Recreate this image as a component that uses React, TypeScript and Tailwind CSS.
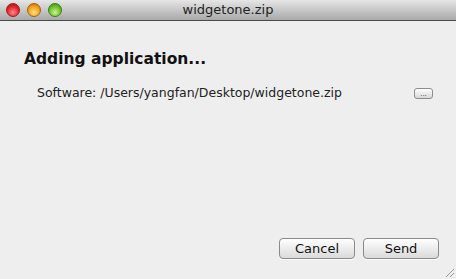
export default function App() {
  return (
    <div
      className="flex h-[279px] w-[456px] flex-col overflow-hidden bg-[#eeeeee] text-black"
      style={{ fontFamily: '"DejaVu Sans", "Liberation Sans", sans-serif' }}
    >
      {/* Title bar */}
      <div className="relative flex h-[21px] shrink-0 items-center border-b border-[#4a4a4a] bg-gradient-to-b from-[#e6e6e6] to-[#a9a9a9]">
        <div className="flex items-center gap-[7px] pl-[6px]">
          <span className="h-[14px] w-[14px] rounded-full border border-[#9c1a1a] bg-[radial-gradient(circle_at_50%_70%,#ff8a8a,#e0262b_55%,#a10f12)]" />
          <span className="h-[14px] w-[14px] rounded-full border border-[#a0620d] bg-[radial-gradient(circle_at_50%_70%,#ffe07a,#f2a11c_55%,#b8670a)]" />
          <span className="h-[14px] w-[14px] rounded-full border border-[#3d7c16] bg-[radial-gradient(circle_at_50%_70%,#c9f58a,#6cc22d_55%,#3c8412)]" />
        </div>
        <div className="absolute inset-x-0 top-0 flex h-[20px] items-center justify-center text-[13px] text-[#222]">
          widgetone.zip
        </div>
      </div>

      {/* Content */}
      <div className="relative flex flex-1 flex-col">
        <h1 className="mt-[28px] ml-[24px] text-[15.5px] font-bold leading-[20px] text-[#111]">
          Adding application...
        </h1>
        <div className="mt-[16px] flex items-center pl-[37px] pr-[23px]">
          <span className="text-[12.5px] leading-[16px] text-[#222]">
            Software: /Users/yangfan/Desktop/widgetone.zip
          </span>
          <button className="ml-auto flex h-[11px] w-[19px] items-end justify-center rounded-[3px] border border-[#8d8d8d] bg-gradient-to-b from-white to-[#d7d7d7] pb-[1px] text-[7px] leading-[6px] text-[#444]">
            ...
          </button>
        </div>

        <div className="mt-auto mb-[20px] flex justify-end gap-[8px] pr-[17px]">
          <button className="h-[21px] w-[76px] rounded-[4px] border border-[#8a8a8a] bg-gradient-to-b from-white to-[#dadada] text-[13px] leading-[19px] text-[#111] shadow-[0_1px_0_rgba(255,255,255,0.8)]">
            Cancel
          </button>
          <button className="h-[21px] w-[76px] rounded-[4px] border border-[#8a8a8a] bg-gradient-to-b from-white to-[#dadada] text-[13px] leading-[19px] text-[#111] shadow-[0_1px_0_rgba(255,255,255,0.8)]">
            Send
          </button>
        </div>

        {/* Resize grip */}
        <svg className="absolute right-[1px] bottom-[1px]" width="11" height="11" viewBox="0 0 11 11">
          <line x1="10" y1="2" x2="2" y2="10" stroke="#9a9a9a" strokeWidth="1" />
          <line x1="10" y1="6" x2="6" y2="10" stroke="#9a9a9a" strokeWidth="1" />
        </svg>
      </div>
    </div>
  );
}
